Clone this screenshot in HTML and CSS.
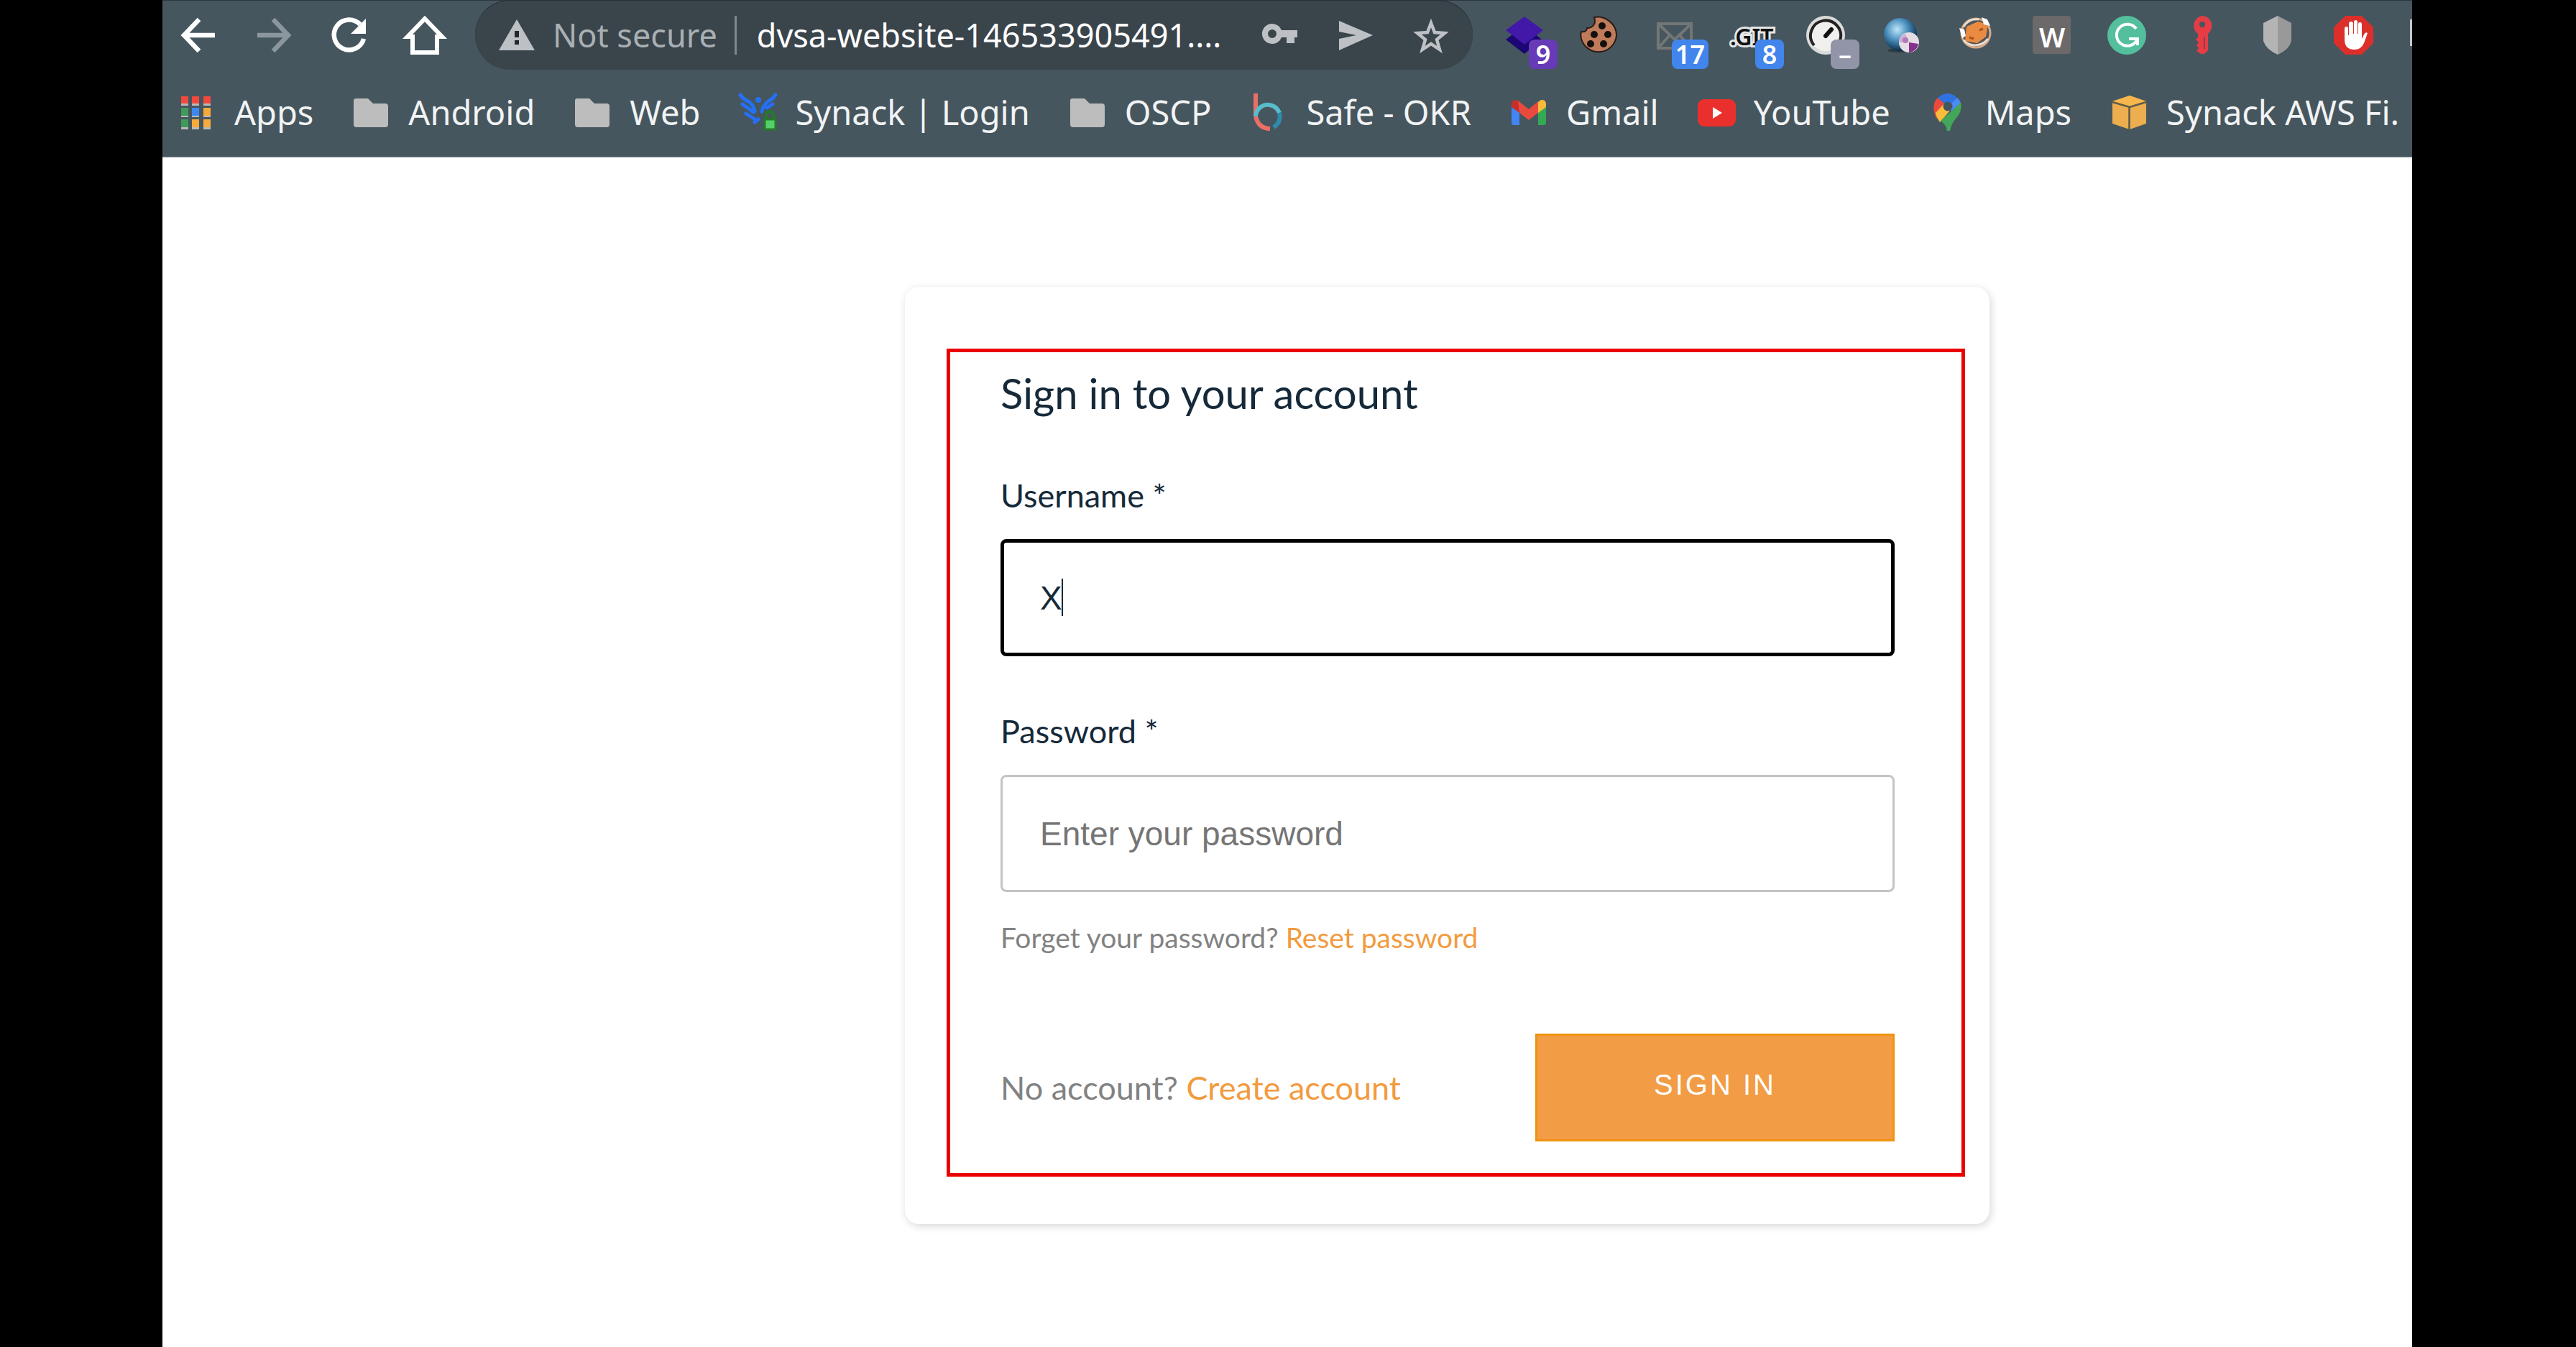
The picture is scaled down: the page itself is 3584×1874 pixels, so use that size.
FILE: index.html
```html
<!DOCTYPE html>
<html lang="en">
<head>
<meta charset="utf-8">
<title>Sign in</title>
<link rel="stylesheet" href="styles.css">
</head>
<body>
<div class="window">
  <header class="browser">
    <div class="toolbar">
      <nav class="nav" aria-label="Navigation">
        <button class="slot" aria-label="Back"><svg viewBox="0 0 52 52"><path d="M49 26H6M27 4 6 26l21 22" fill="none" stroke="#fff" stroke-width="6.5"/></svg></button>
        <button class="slot" aria-label="Forward"><svg viewBox="0 0 52 52"><path d="M3 26h43M25 4l21 22-21 22" fill="none" stroke="#8b979d" stroke-width="6.5"/></svg></button>
        <button class="slot" aria-label="Reload"><svg viewBox="0 0 52 52"><path d="M46 31A21 21 0 1 1 41 11" fill="none" stroke="#fff" stroke-width="6.5"/><path d="M49 3v21H28z" fill="#fff"/></svg></button>
        <button class="slot" aria-label="Home"><svg viewBox="0 0 52 52"><path d="M2 28 26 3l24 25h-7v22H9V28z" fill="none" stroke="#fff" stroke-width="6"/></svg></button>
      </nav>
      <div class="omnibox">
        <span class="slot"><svg viewBox="0 0 52 52"><path d="M26 4 51 47H1z" fill="#bdc1c5"/><path d="M23 20h6v9h-6zM23 33h6v6h-6z" fill="#21282d"/></svg></span>
        <span class="insecure">Not secure</span>
        <span class="divider"></span>
        <span class="url">dvsa-website-146533905491....</span>
        <span class="actions">
          <button class="slot" aria-label="Saved passwords"><svg viewBox="0 0 52 52"><path fill-rule="evenodd" d="M15 10a14 14 0 0 1 13 9h22v10h-4v8H35v-8h-7a14 14 0 1 1-13-19zm0 8a6 6 0 1 0 0 12 6 6 0 0 0 0-12z" fill="#bdc1c5"/></svg></button>
          <button class="slot" aria-label="Send"><svg viewBox="0 0 52 52"><path d="M3 6 50 26 3 47V31l24-5L3 21z" fill="#bdc1c5"/></svg></button>
          <button class="slot" aria-label="Bookmark this page"><svg viewBox="0 0 52 52"><path d="m26 9 5 13 14 1-11 9 4 14-12-8-12 8 4-14-11-9 14-1z" fill="none" stroke="#bdc1c5" stroke-width="4.5"/></svg></button>
        </span>
      </div>
      <div class="extensions">
        <button class="slot" aria-label="Layers"><svg viewBox="0 0 52 52"><path d="M2 32 28 12l24 20-24 20z" fill="#1b0673"/><path d="M2 19 28 0l26 19-26 20z" fill="#4118a8"/></svg><span class="badge badge-purple">9</span></button>
        <button class="slot" aria-label="Cookies"><svg viewBox="0 0 52 52"><path d="M20 1c15-3 31 9 31 25a25 25 0 0 1-49 5c-1-4-1-7 0-10 5 1 8-1 8-5 9 0 13-7 10-15z" fill="#c07c5a" stroke="#2a1c16" stroke-width="2"/><g fill="#15100e"><circle cx="31" cy="13" r="5"/><circle cx="20" cy="25" r="5"/><circle cx="39" cy="25" r="5"/><circle cx="15" cy="38" r="5"/><circle cx="33" cy="38" r="5"/></g></svg></button>
        <button class="slot" aria-label="Mail"><svg viewBox="0 0 52 52"><path d="M4 10h46v34H4zM4 10l23 22 23-22M4 44l16-18M50 44 34 26" fill="none" stroke="#737676" stroke-width="4"/></svg><span class="badge badge-blue">17</span></button>
        <button class="slot" aria-label="Git"><svg viewBox="0 0 52 52"><text x="-1" y="40" class="git">.GIT</text></svg><span class="badge badge-blue">8</span></button>
        <button class="slot" aria-label="Speed"><svg viewBox="0 0 52 52"><circle cx="27" cy="26" r="27" fill="#d9dcdb"/><circle cx="27" cy="26" r="22" fill="#f0f1ef"/><path d="M11 40A21 21 0 1 1 47 33" fill="none" stroke="#262222" stroke-width="4"/><path d="m27 27 8-9" stroke="#111" stroke-width="6" stroke-linecap="round"/></svg><span class="badge badge-grey">–</span></button>
        <button class="slot" aria-label="Proxy"><svg viewBox="0 0 52 52"><defs><radialGradient id="globe" cx=".4" cy=".35" r=".65"><stop offset="0" stop-color="#bfe6fb"/><stop offset=".5" stop-color="#4a8fbd"/><stop offset="1" stop-color="#0c2c4a"/></radialGradient></defs><ellipse cx="24" cy="47" rx="16" ry="3" fill="#2d3b43"/><circle cx="26" cy="25" r="23" fill="url(#globe)"/><circle cx="38" cy="36" r="14" fill="#e4dde5"/><path d="M38 36V50a14 14 0 0 0 13-12z" fill="#87308c"/><path d="M38 36H24a14 14 0 0 1 9-12z" fill="#cfaed3"/><circle cx="33" cy="33" r="4" fill="#b07ab8"/></svg></button>
        <button class="slot" aria-label="Fox"><svg viewBox="0 0 52 52"><circle cx="26" cy="23" r="20" fill="#53565a" stroke="#d5aa88" stroke-width="3"/><path d="M13 14 29 7l14 4-3 17-12 9-17-3z" fill="#e98b43"/><path d="m34 1 8 3 4 9-9-2zM3 16l7 2 2 9-5 3z" fill="#fff"/><path d="M9 14C14 6 22 3 30 4M9 33c8 9 24 10 34-2" fill="none" stroke="#eadccf" stroke-width="3"/><path d="m17 29 6 2M31 19l5-2" stroke="#a7541b" stroke-width="3"/></svg></button>
        <button class="slot" aria-label="Wiki"><svg viewBox="0 0 52 52"><rect width="53" height="53" rx="4" y="-1" fill="#6b6969"/><text x="27" y="43" class="wiki">W</text></svg></button>
        <button class="slot" aria-label="Grammar"><svg viewBox="0 0 52 52"><circle cx="26" cy="26" r="27" fill="#54bf9c"/><path d="M39 17a15 15 0 1 0 1 16M29 31h12v9" fill="none" stroke="#fff" stroke-width="4"/></svg></button>
        <button class="slot" aria-label="Key"><svg viewBox="0 0 52 52"><path fill-rule="evenodd" d="M26-1a14 14 0 0 1 8 25v23l-5 5h-5l-6-4 3-4-3-4 3-4-4-4 3-3v-5A14 14 0 0 1 26-1zm0 8a4 4 0 1 0 0 8 4 4 0 0 0 0-8z" fill="#e53d46"/><path d="M29 28v17" stroke="#8d3e48" stroke-width="2"/></svg></button>
        <button class="slot" aria-label="Shield"><svg viewBox="0 0 52 52"><path d="M26-1 6 9v25q4 12 20 19z" fill="#b4b4b4"/><path d="M26-1 45 9v25q-3 12-19 19z" fill="#999"/></svg></button>
        <button class="slot" aria-label="Ad blocker"><svg viewBox="0 0 52 52"><path d="M15-1h23l16 16v22L38 53H15L-1 37V15z" fill="#dc2f2a"/><path d="M14 17q0-3 2.500-3T19 17v9h1V10q0-3 3-3t3 3v14h1V8q0-3 2.500-3T32 8v16h1V11q0-3 2.500-3T38 11v20l3-6q2-4 5-2l-5 14q-4 9-13 9-14 0-14-14z" fill="#fff"/></svg></button>
        <button class="slot" aria-label="More extensions"><svg viewBox="0 0 52 52"><path d="M0 4h40v37H0z" fill="#c6c9cb"/></svg></button>
      </div>
    </div>
    <nav class="bookmarks" aria-label="Bookmarks">
      <a class="bookmark" href="#"><svg class="slot" viewBox="0 0 52 52"><g fill="#b9b9b9"><path d="M4 4h10v13H4zM19 4h10v13H19zM35 4h10v13H35zM4 20h10v13H4zM19 20h10v13H19zM35 20h10v13H35zM4 36h10v14H4zM19 36h10v14H19zM35 36h10v14H35z"/></g><path d="M4 4h10v10H4zM19 4h10v10H19zM35 4h10v10H35z" fill="#f2493e"/><path d="M4 20h10v11H4zM4 36h10v11H4z" fill="#409a5a"/><path d="M19 20h10v11H19z" fill="#3f87f0"/><path d="M35 20h10v11H35zM35 36h10v11H35zM19 36h10v11H19z" fill="#f7ab3c"/></svg>Apps</a>
      <a class="bookmark" href="#"><svg class="slot" viewBox="0 0 52 52"><path d="M5 7h17l7 7h17q4 0 4 4v25q0 4-4 4H6q-4 0-4-4V10q0-3 3-3z" fill="#bdbdbd"/></svg>Android</a>
      <a class="bookmark" href="#"><svg class="slot" viewBox="0 0 52 52"><path d="M5 7h17l7 7h17q4 0 4 4v25q0 4-4 4H6q-4 0-4-4V10q0-3 3-3z" fill="#bdbdbd"/></svg>Web</a>
      <a class="bookmark" href="#"><svg class="slot" viewBox="0 0 52 52"><g fill="none" stroke="#2470f5" stroke-width="5" stroke-linecap="round"><path d="M2 2q4 6 11 9 8 5 9 14M5 15q8 5 15 11M10 28q8 5 12 8M51 2q-4 6-10 9-7 5-9 14M47 15l-8 5M22 40l5-4"/></g><circle cx="27" cy="9" r="4" fill="#2470f5"/><path d="M38 36v-6q0-5 5-5t5 5v6" fill="none" stroke="#267a2b" stroke-width="4"/><path d="M36 36h15v14H36z" fill="#55cf6a" stroke="#267a2b" stroke-width="3"/></svg>Synack | Login</a>
      <a class="bookmark" href="#"><svg class="slot" viewBox="0 0 52 52"><path d="M5 7h17l7 7h17q4 0 4 4v25q0 4-4 4H6q-4 0-4-4V10q0-3 3-3z" fill="#bdbdbd"/></svg>OSCP</a>
      <a class="bookmark" href="#"><svg class="slot" viewBox="0 0 52 52"><g fill="none" stroke-width="6"><path d="M8 0v32" stroke="#ea6f66"/><path d="M8 32a17 17 0 0 1 33-5" stroke="#57bccb"/><path d="M41 27q3 13-8 20" stroke="#2d8cac"/><path d="M8 32q4 17 20 17" stroke="#ea6f66"/></g></svg>Safe - OKR</a>
      <a class="bookmark" href="#"><svg class="slot" viewBox="0 0 52 52"><path d="M2 16l11 8v20H5q-3 0-3-3z" fill="#4285f4"/><path d="M50 16l-11 8v20h8q3 0 3-3z" fill="#34a853"/><path d="M39 12l4-3q7-1 7 6v4l-11 8z" fill="#f6bb3c"/><path d="M2 19v-4q0-7 7-6l4 3v15z" fill="#c5302b"/><path d="m11 10 15 12 13-11v16L26 37 13 27z" fill="#ea4a3d"/></svg>Gmail</a>
      <a class="bookmark" href="#"><svg class="slot" viewBox="0 0 52 52"><rect y="8" width="53" height="38" rx="9" fill="#ea302d"/><path d="m21 19 13 8-13 8z" fill="#fff"/></svg>YouTube</a>
      <a class="bookmark" href="#"><svg class="slot" viewBox="0 0 52 52"><path d="M12 6 26 18 10 35Q2 15 12 6z" fill="#ea4a3d"/><path d="M12 6Q26-6 39 6L26 18z" fill="#2f72e2"/><path d="M39 6 26 18l5 7 13-12q-1-4-5-7z" fill="#4b8bf5"/><path d="M10 26 20 15l9 9-14 16q-6-8-6-15z" fill="#fbbc3c"/><path d="M44 12q3 13-7 23-6 7-8 17h-4q-1-8-9-14l17-15z" fill="#43a659"/><circle cx="26" cy="18" r="6.500" fill="#46565e"/></svg>Maps</a>
      <a class="bookmark" href="#"><svg class="slot" viewBox="0 0 52 52"><path d="M3 11 27 3l23 8v31l-23 8-24-8z" fill="#ecae4e"/><path d="M3 11 27 3l23 8-23 7z" fill="#f9b64c"/><path d="m3 12 24 7 23-7M26.500 18v32" fill="none" stroke="#5d5a49" stroke-width="2.500"/></svg>Synack AWS Fi.</a>
    </nav>
  </header>
  <main class="page">
    <section class="card">
      <form class="form">
        <h1 class="title">Sign in to your account</h1>
        <div class="field">
          <label for="username">Username *</label>
          <div class="control">
            <input class="input input-active" id="username" type="text" value="X">
            <span class="caret"></span>
          </div>
        </div>
        <div class="field">
          <label for="password">Password *</label>
          <div class="control">
            <input class="input" id="password" type="password" placeholder="Enter your password">
          </div>
        </div>
        <p class="hint">Forget your password? <a href="#">Reset password</a></p>
        <div class="footer">
          <span>No account? <a href="#">Create account</a></span>
          <button class="submit" type="button">SIGN IN</button>
        </div>
      </form>
    </section>
  </main>
</div>
</body>
</html>
```
FILE: styles.css
```css
* {
  box-sizing: border-box;
}

body {
  margin: 0;
  background: #000;
}

a {
  color: #f29b3f;
  text-decoration: none;
}

button {
  margin: 0;
  padding: 0;
  border: 0;
  background: none;
}

.window {
  display: flex;
  flex-direction: column;
  min-height: 100vh;
  margin: 0 228px 0 226px;
  background: #fff;
  overflow: hidden;
}

/* Browser chrome */

.browser {
  background: #46565e;
  color: #f1f3f4;
  font-family: "Noto Sans", sans-serif;
  border-bottom: 1px solid #7d888d;
  overflow: hidden;
}

.toolbar {
  display: flex;
  align-items: center;
  gap: 44px;
  height: 97px;
  padding-left: 24px;
  box-shadow: inset 0 1px #2e383d;
}

.slot {
  position: relative;
  flex: none;
  display: block;
  width: 52px;
  height: 52px;
  overflow: visible;
}

.slot svg {
  display: block;
  width: 52px;
  height: 52px;
  overflow: visible;
}

.nav,
.actions,
.extensions {
  display: flex;
  flex: none;
  gap: 53px;
}

.extensions {
  width: 1263px;
}

.omnibox {
  display: flex;
  flex: 1;
  align-items: center;
  min-width: 0;
  height: 97px;
  padding: 0 32px;
  border-radius: 48px;
  background: #3a444b;
  box-shadow: inset 0 1px #272e32;
  font-size: 45px;
  line-height: 60px;
  white-space: nowrap;
}

.insecure {
  margin-left: 24px;
  color: #a9b0b4;
}

.divider {
  width: 3px;
  height: 54px;
  margin: 0 28px 0 24px;
  background: #80868b;
}

.url {
  flex: 1;
  min-width: 0;
  color: #fff;
}

.badge {
  position: absolute;
  top: 32px;
  right: -22px;
  min-width: 40px;
  height: 41px;
  padding: 0 5px;
  border-radius: 8px;
  color: #fff;
  font: 600 36px/41px "Noto Sans", sans-serif;
  text-align: center;
}

.badge-purple {
  background: #673ab7;
}

.badge-blue {
  background: #4285ec;
}

.badge-grey {
  background: #9294a8;
}

.git {
  font: 600 32px "Noto Sans", sans-serif;
  fill: #111;
  stroke: #e4e6e6;
  stroke-width: 6px;
  paint-order: stroke;
}

.wiki {
  font: 600 38px "Noto Sans", sans-serif;
  fill: #fff;
  text-anchor: middle;
}

.bookmarks {
  display: flex;
  align-items: center;
  gap: 54px;
  height: 121px;
  padding: 0 0 3px 22px;
  font-size: 47px;
  line-height: 64px;
  white-space: nowrap;
}

.bookmark {
  display: flex;
  flex: none;
  align-items: center;
  gap: 26px;
  color: #f1f3f4;
}

/* Sign-in page */

.page {
  flex: 1;
  padding: 180px 588px 171px 1033px;
  font-family: Lato, sans-serif;
}

.card {
  padding: 86px 34px 66px 58px;
  border-radius: 20px;
  background: #fff;
  box-shadow: 2px 3px 12px rgba(0, 0, 0, 0.16);
}

.form {
  padding: 22px 93px 44px 70px;
  border: 5px solid #eb0000;
  color: #152939;
  font-size: 45px;
  line-height: 54px;
}

.title {
  margin: 0 0 80px;
  font-size: 58px;
  font-weight: 400;
  line-height: 70px;
}

.field {
  display: flex;
  flex-direction: column;
  gap: 34px;
}

.field + .field {
  margin-top: 77px;
}

.control {
  position: relative;
}

.input {
  display: block;
  width: 100%;
  height: 163px;
  padding: 0 52px;
  border: 3px solid #c4c4c4;
  border-radius: 8px;
  background: #fff;
  color: #152939;
  font: 46px "Liberation Sans", Arial, sans-serif;
}

.input::placeholder {
  color: #757575;
}

.input-active {
  padding: 0 50px;
  border: 5px solid #000;
}

.caret {
  position: absolute;
  top: 55px;
  left: 85px;
  width: 2px;
  height: 52px;
  background: #152939;
}

.hint {
  margin: 39px 0 110px;
  color: #828282;
  font-size: 39px;
  line-height: 48px;
}

.footer {
  display: flex;
  align-items: center;
  justify-content: space-between;
  color: #828282;
}

.submit {
  width: 500px;
  height: 150px;
  padding-bottom: 8px;
  border: 3px solid #f0930f;
  background: #f29c46;
  color: #fff;
  font: 40px "Liberation Sans", Arial, sans-serif;
  letter-spacing: 3px;
}
```
